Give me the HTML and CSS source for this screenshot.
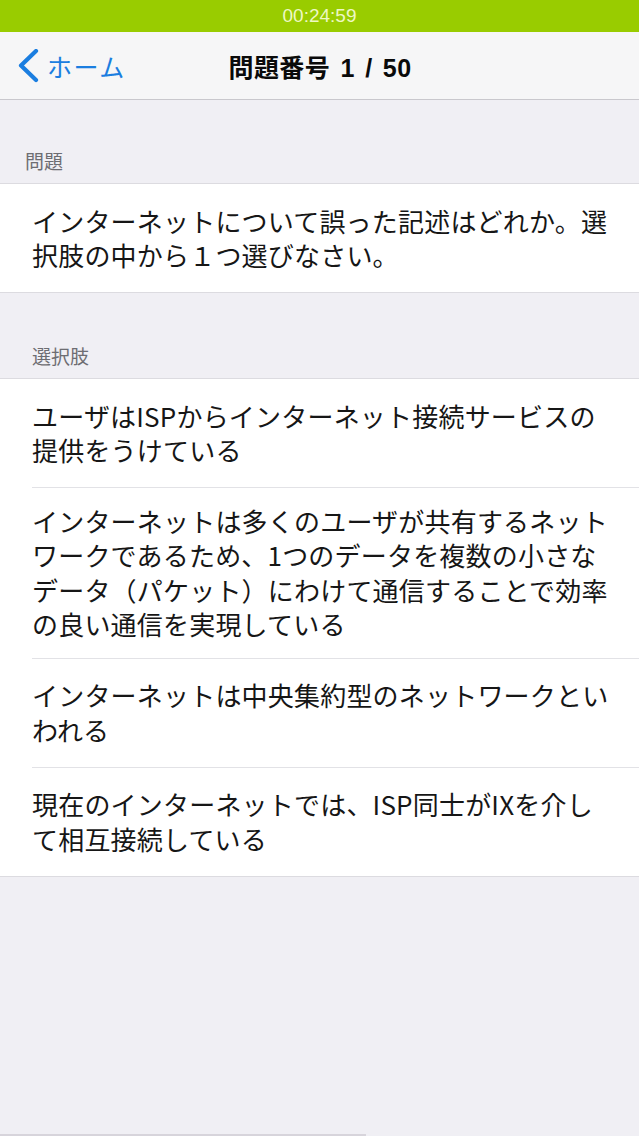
FILE: index.html
```html
<!DOCTYPE html>
<html lang="ja">
<head>
<meta charset="utf-8">
<title>問題番号 1 / 50</title>
<link rel="stylesheet" href="styles.css">
</head>
<body>
<div class="screen">
  <div class="status-bar">00:24:59</div>
  <header class="nav-bar">
    <a class="back" href="#">
      <svg class="chevron" width="22" height="34" viewBox="0 0 22 34" aria-hidden="true">
        <polyline points="19,2 4,16.5 19,31" fill="none" stroke="#1b7ee0" stroke-width="4.2" stroke-linecap="round" stroke-linejoin="round"/>
      </svg>
      <span class="back-label">ホーム</span>
    </a>
    <h1 class="nav-title">問題番号 1 / 50</h1>
  </header>

  <main class="content">
    <section class="section">
      <h2 class="section-header section-header--first">問題</h2>
      <div class="group">
        <div class="cell">
          <p class="cell-text">インターネットについて誤った記述はどれか。選択肢の中から１つ選びなさい。</p>
        </div>
      </div>
    </section>

    <section class="section">
      <h2 class="section-header">選択肢</h2>
      <div class="group">
        <div class="cell">
          <p class="cell-text">ユーザはISPからインターネット接続サービスの提供をうけている</p>
        </div>
        <div class="cell">
          <p class="cell-text">インターネットは多くのユーザが共有するネットワークであるため、1つのデータを複数の小さなデータ（パケット）にわけて通信することで効率の良い通信を実現している</p>
        </div>
        <div class="cell">
          <p class="cell-text">インターネットは中央集約型のネットワークといわれる</p>
        </div>
        <div class="cell">
          <p class="cell-text">現在のインターネットでは、ISP同士がIXを介して相互接続している</p>
        </div>
      </div>
    </section>
  </main>

  <div class="progress"><div class="progress-fill" style="width: 57.3%"></div></div>
</div>
</body>
</html>
```

FILE: styles.css
```css
* {
  box-sizing: border-box;
}

html, body {
  margin: 0;
  padding: 0;
}

body {
  background: #efeff4;
  font-family: "Noto Sans CJK JP", "Noto Sans", sans-serif;
  color: #111;
}

.screen {
  width: 639px;
  height: 1136px;
  display: flex;
  flex-direction: column;
  background: #f0eff4;
  overflow: hidden;
}

.status-bar {
  height: 32px;
  flex: none;
  background: #99cc00;
  color: #eef8c4;
  font-family: "Liberation Sans", Arial, sans-serif;
  font-size: 19px;
  line-height: 32px;
  text-align: center;
}

.nav-bar {
  height: 68px;
  flex: none;
  background: #f6f6f7;
  border-bottom: 1px solid #c9c8cd;
  display: flex;
  align-items: center;
  justify-content: center;
  position: relative;
}

.back {
  position: absolute;
  left: 17px;
  top: 0;
  bottom: 0;
  display: flex;
  align-items: center;
  gap: 8px;
  text-decoration: none;
  color: #1b7ee0;
}

.chevron {
  display: block;
}

.back-label {
  font-size: 25px;
  line-height: 1;
  padding-top: 1px;
  letter-spacing: 1.5px;
}

.nav-title {
  margin: 0;
  font-family: "Liberation Sans", "Noto Sans CJK JP", sans-serif;
  font-weight: 700;
  font-size: 25px;
  letter-spacing: 0.4px;
  word-spacing: 3px;
  color: #0a0a0a;
  padding-left: 1px;
}

.content {
  flex: 1;
}

.section-header {
  margin: 0;
  padding: 51px 32px 10px;
  font-size: 19px;
  line-height: 24px;
  font-weight: 400;
  color: #6d6d72;
}

.section-header--first {
  padding-top: 49px;
  padding-left: 25px;
}

.group {
  background: #fff;
  border-top: 1px solid #dcdbe0;
  border-bottom: 1px solid #dcdbe0;
}

.cell {
  padding-left: 32px;
}

.cell-text {
  margin: 0;
  min-height: 109px;
  padding: 16px 24px 16px 0;
  display: flex;
  align-items: center;
  font-size: 26px;
  line-height: 34.4px;
  letter-spacing: 0.2px;
  color: #161616;
  border-bottom: 1px solid #e2e2e6;
}

.cell:last-child .cell-text {
  border-bottom: none;
  min-height: 108px;
}

.progress {
  height: 2px;
  flex: none;
  background: #f0eff4;
}

.progress-fill {
  height: 100%;
  background: #d7d4db;
}
```
